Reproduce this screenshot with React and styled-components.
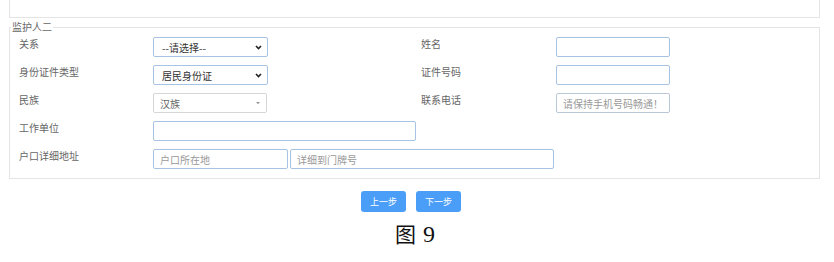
import React from "react";
import styled, { createGlobalStyle } from "styled-components";

const GlobalStyle = createGlobalStyle`
  body {
    margin: 0;
    background: #fff;
    font-family: "Noto Sans CJK SC", "Noto Sans", sans-serif;
    color: #444;
  }
`;

function App() {
  return (
    <Page>
      <GlobalStyle />
      <TopPanel />
      <Group>
        <Legend>监护人二</Legend>
        <FormGrid>
          <Label>关系</Label>
          <Cell>
            <SelectBox width={115}>
              <span>--请选择--</span>
              <Chevron />
            </SelectBox>
          </Cell>
          <Label>姓名</Label>
          <Cell>
            <Input width={114} />
          </Cell>

          <Label>身份证件类型</Label>
          <Cell>
            <SelectBox width={115}>
              <span>居民身份证</span>
              <Chevron />
            </SelectBox>
          </Cell>
          <Label>证件号码</Label>
          <Cell>
            <Input width={114} />
          </Cell>

          <Label>民族</Label>
          <Cell>
            <SelectBox width={114} plain>
              <span>汉族</span>
              <Caret />
            </SelectBox>
          </Cell>
          <Label>联系电话</Label>
          <Cell>
            <Input width={114} gray placeholder="请保持手机号码畅通！" />
          </Cell>

          <Label>工作单位</Label>
          <Cell span={3}>
            <Input width={263} />
          </Cell>

          <Label>户口详细地址</Label>
          <Cell span={3}>
            <Input width={135} placeholder="户口所在地" />
            <Input width={264} placeholder="详细到门牌号" />
          </Cell>
        </FormGrid>
      </Group>
      <Actions>
        <StepButton>上一步</StepButton>
        <StepButton>下一步</StepButton>
      </Actions>
      <Caption>
        图<span>9</span>
      </Caption>
    </Page>
  );
}

function Chevron() {
  return (
    <Arrow width="7" height="5" viewBox="0 0 7 5">
      <path d="M1 1 L3.5 3.6 L6 1" fill="none" stroke="#222" strokeWidth="1.6" />
    </Arrow>
  );
}

function Caret() {
  return (
    <Arrow width="6" height="4" viewBox="0 0 6 4">
      <path d="M1 1 L5 1 L3 3.2 Z" fill="#999" />
    </Arrow>
  );
}

export default App;

const Page = styled.div`
  width: 834px;
  height: 262px;
  overflow: hidden;
`;

const TopPanel = styled.div`
  margin: 0 14px 0 9px;
  height: 17px;
  border: 1px solid #e4e4e4;
  border-top: none;
`;

const Group = styled.fieldset`
  margin: 3px 14px 0 9px;
  padding: 0 0 5px 9px;
  border: 1px solid #e4e4e4;
  min-width: 0;
`;

const Legend = styled.legend`
  font-size: 10px;
  line-height: 12px;
  padding: 0 1px;
  margin-left: -8px;
  color: #666;
`;

const FormGrid = styled.div`
  display: grid;
  grid-template-columns: 134px 268px 135px 1fr;
  grid-auto-rows: 28px;
`;

const Label = styled.div`
  font-size: 10px;
  line-height: 14px;
  padding-top: 4px;
  color: #666;
`;

const Cell = styled.div`
  display: flex;
  align-items: center;
  gap: 2px;
  grid-column: span ${(p) => p.span || 1};
`;

const Input = styled.input`
  box-sizing: border-box;
  width: ${(p) => p.width}px;
  height: 20px;
  margin: 0;
  padding: 0 6px;
  border: 1px solid ${(p) => (p.gray ? "#b9c7d6" : "#a6c3e3")};
  border-radius: 2px;
  background: #fff;
  font-family: inherit;
  font-size: 10px;
  color: #555;
  outline: none;

  &::placeholder {
    color: #999;
  }
`;

const SelectBox = styled.div`
  position: relative;
  box-sizing: border-box;
  width: ${(p) => p.width}px;
  height: 20px;
  display: flex;
  align-items: center;
  padding-left: ${(p) => (p.plain ? 6 : 8)}px;
  border: 1px solid ${(p) => (p.plain ? "#d6d6d6" : "#a6c3e3")};
  border-radius: 2px;
  background: #fff;
  font-size: 10px;
  color: ${(p) => (p.plain ? "#666" : "#333")};
`;

const Arrow = styled.svg`
  position: absolute;
  right: 5px;
  top: 7px;
`;

const Actions = styled.div`
  display: flex;
  justify-content: center;
  gap: 10px;
  margin-top: 12px;
  padding-right: 12px;
`;

const StepButton = styled.button`
  width: 45px;
  height: 21px;
  padding: 0;
  border: none;
  border-radius: 3px;
  background: #4a9ef7;
  color: #fff;
  font-family: inherit;
  font-size: 9px;
  cursor: pointer;
`;

const Caption = styled.div`
  margin-top: 8px;
  text-align: center;
  padding-right: 4px;
  font-size: 21px;
  line-height: 26px;
  color: #111;

  span {
    margin-left: 7px;
    font-family: "Liberation Serif", serif;
    font-size: 24px;
  }
`;
